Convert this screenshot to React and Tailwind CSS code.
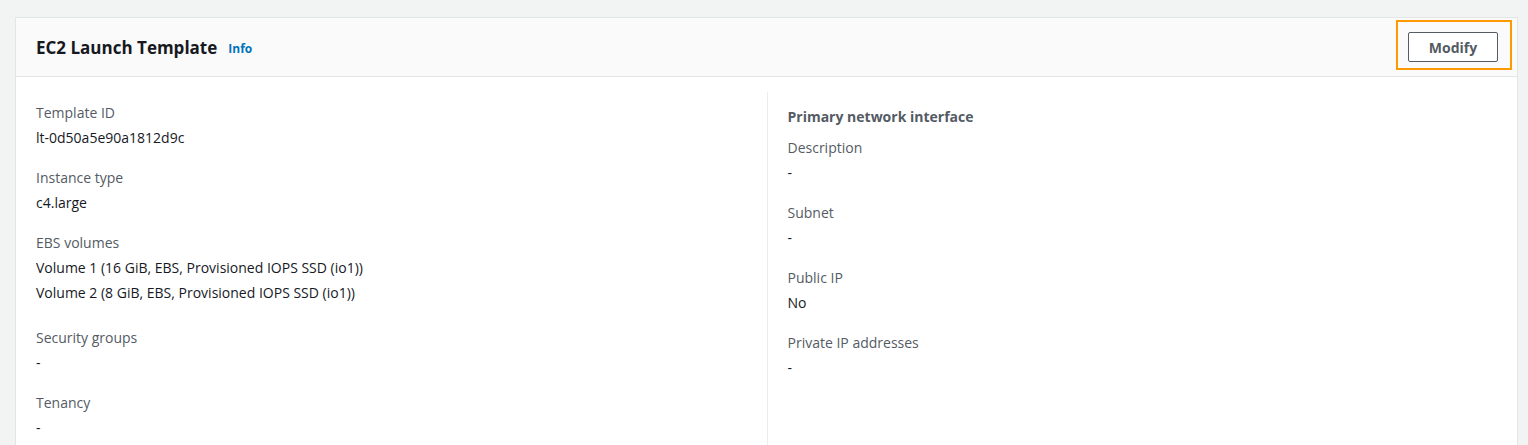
import React from 'react';

const font = { fontFamily: '"Open Sans", "Noto Sans", Arial, sans-serif' };

function Field({ label, values, extra }) {
  return (
    <div className={extra ? 'mb-[23px]' : 'mb-[18px]'}>
      <div className="text-[14px] leading-[22px] text-[#545b64]">{label}</div>
      {values.map((v, i) => (
        <div key={i} className="mt-[3px] text-[14px] leading-[22px] text-[#16191f]">
          {v}
        </div>
      ))}
    </div>
  );
}

export default function App() {
  return (
    <div className="min-h-screen bg-[#f2f3f3] pt-[17px] pl-[15px] pr-[10px]" style={font}>
      <div className="bg-white border border-[#e3e6e6] h-[460px]">
        <div className="h-[59px] bg-[#fafafa] border-b border-[#e3e6e6] flex justify-between pl-5 pr-[5px]">
          <div className="flex items-center gap-[11px] pt-[1px]">
            <h2 className="text-[17px] font-bold text-[#16191f] leading-[24px]">EC2 Launch Template</h2>
            <a className="text-[12px] font-bold text-[#0073bb] leading-[20px] pt-[2px]">Info</a>
          </div>
          <div className="self-start mt-[2px] border-2 border-[#ff9900] pl-[10px] pr-[12px] pt-[10px] pb-[6px]">
            <button className="w-[90px] h-[30px] border border-[#545b64] rounded-[2px] bg-white text-[14px] font-bold text-[#545b64]">
              Modify
            </button>
          </div>
        </div>
        <div className="grid grid-cols-2 px-5 pt-[15px]">
          <div className="pt-[10px]">
            <Field label="Template ID" values={['lt-0d50a5e90a1812d9c']} />
            <Field label="Instance type" values={['c4.large']} />
            <Field
              label="EBS volumes"
              extra
              values={[
                'Volume 1 (16 GiB, EBS, Provisioned IOPS SSD (io1))',
                'Volume 2 (8 GiB, EBS, Provisioned IOPS SSD (io1))',
              ]}
            />
            <Field label="Security groups" values={['-']} />
            <Field label="Tenancy" values={['-']} />
          </div>
          <div className="border-l border-[#eaeded] pl-5 pt-[14px]">
            <div className="text-[14px] font-bold leading-[22px] text-[#545b64] mb-[9px]">
              Primary network interface
            </div>
            <Field label="Description" values={['-']} />
            <Field label="Subnet" values={['-']} />
            <Field label="Public IP" values={['No']} />
            <Field label="Private IP addresses" values={['-']} />
          </div>
        </div>
      </div>
    </div>
  );
}
